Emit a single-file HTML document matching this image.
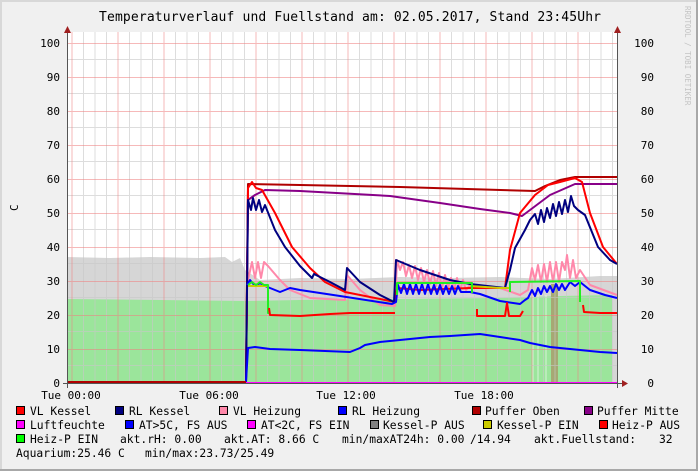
<!DOCTYPE html>
<html><head><meta charset="utf-8"><style>
html,body{margin:0;padding:0;background:#f0f0f0;}
svg{display:block;}
text{font-family:"DejaVu Sans Mono","Liberation Mono",monospace;fill:#000;}
</style></head><body>
<svg width="698" height="471" viewBox="0 0 698 471" xmlns="http://www.w3.org/2000/svg">
<rect x="0" y="0" width="698" height="471" fill="#f0f0f0"/>
<rect x="0" y="0" width="698" height="2" fill="#d8d8d8"/>
<rect x="0" y="0" width="2" height="471" fill="#d8d8d8"/>
<rect x="696" y="0" width="2" height="471" fill="#a8a8a8"/>
<rect x="0" y="469" width="698" height="2" fill="#a8a8a8"/>
<text x="99" y="21" font-size="13" textLength="502">Temperaturverlauf und Fuellstand am: 02.05.2017, Stand 23:45Uhr</text>
<text transform="translate(685,6) rotate(90)" font-size="7.5" style="fill:#c4c4c4">RRDTOOL / TOBI OETIKER</text>
<rect x="67" y="32" width="550" height="351" fill="#ffffff"/>
<polygon fill="#d6d6d6" points="67,383 67,257 110,258 150,257 200,258 225,257 232,262 240,258 245,270 260,280 300,278 350,279 400,277 450,278 500,277 550,279 600,276 617,276 617,383"/>
<polygon fill="#9be59b" points="67,383 67,299 245,301 300,300 400,299 500,298 560,296 612,295 612,383"/>
<rect x="551" y="284" width="7" height="99" fill="#a6a874"/>
<g stroke="#ffffff" stroke-width="1" opacity="0.6"><line x1="533" y1="295" x2="533" y2="383"/><line x1="538" y1="295" x2="538" y2="383"/><line x1="546" y1="295" x2="546" y2="383"/></g>
<g stroke="#c8c8c8" stroke-width="1" opacity="0.6">
<line x1="67" y1="365.5" x2="617" y2="365.5"/><line x1="67" y1="331.5" x2="617" y2="331.5"/><line x1="67" y1="297.5" x2="617" y2="297.5"/><line x1="67" y1="263.5" x2="617" y2="263.5"/><line x1="67" y1="229.5" x2="617" y2="229.5"/><line x1="67" y1="195.5" x2="617" y2="195.5"/><line x1="67" y1="161.5" x2="617" y2="161.5"/><line x1="67" y1="127.5" x2="617" y2="127.5"/><line x1="67" y1="93.5" x2="617" y2="93.5"/><line x1="67" y1="59.5" x2="617" y2="59.5"/>
<line x1="83.5" y1="32" x2="83.5" y2="383"/><line x1="95" y1="32" x2="95" y2="383"/><line x1="106.5" y1="32" x2="106.5" y2="383"/>
<line x1="129.5" y1="32" x2="129.5" y2="383"/><line x1="141" y1="32" x2="141" y2="383"/><line x1="152.5" y1="32" x2="152.5" y2="383"/>
<line x1="175.5" y1="32" x2="175.5" y2="383"/><line x1="187" y1="32" x2="187" y2="383"/><line x1="198.5" y1="32" x2="198.5" y2="383"/>
<line x1="221.5" y1="32" x2="221.5" y2="383"/><line x1="233" y1="32" x2="233" y2="383"/><line x1="244.5" y1="32" x2="244.5" y2="383"/>
<line x1="267.5" y1="32" x2="267.5" y2="383"/><line x1="279" y1="32" x2="279" y2="383"/><line x1="290.5" y1="32" x2="290.5" y2="383"/>
<line x1="313.5" y1="32" x2="313.5" y2="383"/><line x1="325" y1="32" x2="325" y2="383"/><line x1="336.5" y1="32" x2="336.5" y2="383"/>
<line x1="359.5" y1="32" x2="359.5" y2="383"/><line x1="371" y1="32" x2="371" y2="383"/><line x1="382.5" y1="32" x2="382.5" y2="383"/>
<line x1="405.5" y1="32" x2="405.5" y2="383"/><line x1="417" y1="32" x2="417" y2="383"/><line x1="428.5" y1="32" x2="428.5" y2="383"/>
<line x1="451.5" y1="32" x2="451.5" y2="383"/><line x1="463" y1="32" x2="463" y2="383"/><line x1="474.5" y1="32" x2="474.5" y2="383"/>
<line x1="497.5" y1="32" x2="497.5" y2="383"/><line x1="509" y1="32" x2="509" y2="383"/><line x1="520.5" y1="32" x2="520.5" y2="383"/>
<line x1="543.5" y1="32" x2="543.5" y2="383"/><line x1="555" y1="32" x2="555" y2="383"/><line x1="566.5" y1="32" x2="566.5" y2="383"/>
<line x1="589.5" y1="32" x2="589.5" y2="383"/><line x1="601" y1="32" x2="601" y2="383"/><line x1="612.5" y1="32" x2="612.5" y2="383"/>
</g>
<g stroke="#f08080" stroke-width="1" opacity="0.55">
<line x1="67" y1="349.5" x2="617" y2="349.5"/><line x1="67" y1="315.5" x2="617" y2="315.5"/><line x1="67" y1="281.5" x2="617" y2="281.5"/><line x1="67" y1="247.5" x2="617" y2="247.5"/><line x1="67" y1="213.5" x2="617" y2="213.5"/><line x1="67" y1="179.5" x2="617" y2="179.5"/><line x1="67" y1="145.5" x2="617" y2="145.5"/><line x1="67" y1="111.5" x2="617" y2="111.5"/><line x1="67" y1="77.5" x2="617" y2="77.5"/><line x1="67" y1="43.5" x2="617" y2="43.5"/>
<line x1="72" y1="32" x2="72" y2="383"/><line x1="118" y1="32" x2="118" y2="383"/><line x1="164" y1="32" x2="164" y2="383"/><line x1="210" y1="32" x2="210" y2="383"/><line x1="256" y1="32" x2="256" y2="383"/><line x1="302" y1="32" x2="302" y2="383"/><line x1="348" y1="32" x2="348" y2="383"/><line x1="394" y1="32" x2="394" y2="383"/><line x1="440" y1="32" x2="440" y2="383"/><line x1="486" y1="32" x2="486" y2="383"/><line x1="532" y1="32" x2="532" y2="383"/><line x1="578" y1="32" x2="578" y2="383"/>
</g>
<g fill="none" stroke-width="2" stroke-linejoin="round">
<polyline stroke="#b00000" points="67,382 246,382 248,184 300,185 400,187 535,191 545,186 560,180 575,177 617,177"/>
<polyline stroke="#880088" points="246,382 248,200 255,195 265,190 300,191 390,196 440,203 480,209 510,213 522,216 530,210 550,195 575,184 617,184"/>
<polyline stroke="#ff88aa" points="248,280 252,262 255,278 258,262 261,278 264,262 268,266 280,280 290,290 310,298 345,300 347,275 360,290 380,305 395,306 397,260 400,270 403,262 406,276 409,265 412,278 415,266 418,280 421,268 424,282 427,270 430,284 433,271 436,286 439,273 442,288 445,275 448,288 451,278 454,290 457,278 460,290 463,280 466,290 470,285 500,288 520,295 528,290 532,268 535,280 538,265 541,282 544,264 547,282 550,262 553,282 556,262 559,282 562,262 565,270 567,255 570,278 573,260 576,278 580,270 590,285 617,295"/>
<polyline stroke="#ff0000" points="246,382 248,188 252,182 256,188 262,190 275,213 292,247 310,268 325,282 345,292 395,302 397,288 420,290 470,288 505,288 510,250 520,213 535,195 548,185 560,182 575,178 582,182 590,213 603,247 617,264"/>
<polyline stroke="#000080" points="246,382 248,200 251,210 253,198 256,210 259,200 262,212 265,205 275,230 285,247 300,266 312,278 314,274 330,282 345,290 347,268 360,282 380,295 394,302 396,260 420,270 450,280 470,284 505,288 510,270 515,248 525,230 530,220 535,214 538,224 541,210 544,222 547,208 550,218 553,204 556,216 559,202 562,214 565,200 568,212 571,196 574,206 578,210 585,215 598,247 610,260 617,264"/>
<polyline stroke="#0000ff" points="247,285 250,280 255,286 260,283 265,286 280,292 290,288 300,290 340,296 392,304 396,302 398,285 401,293 404,284 407,294 410,284 413,294 416,284 419,294 422,284 425,294 428,284 431,294 434,285 437,294 440,285 443,294 446,286 449,294 452,286 455,294 458,286 461,292 470,292 480,294 500,301 520,304 525,300 528,298 532,290 535,296 538,288 541,294 544,286 547,292 550,286 553,292 556,284 559,290 562,284 565,290 570,282 575,286 580,282 590,290 605,295 617,298"/>
<polyline stroke="#0000ff" points="246,382 248,348 255,347 270,349 300,350 350,352 360,348 365,345 380,342 390,341 410,339 430,337 450,336 480,334 500,337 520,340 530,343 550,347 580,350 600,352 617,353"/>
<polyline stroke="#cccc00" points="248,286 268,286"/>
<polyline stroke="#cccc00" points="470,286 500,288 510,288"/>
<polyline stroke="#22ee22" points="248,285 252,282 256,285 260,282 264,285 268,285 268,313 270,313"/>
<polyline stroke="#22ee22" points="397,295 397,283 472,283 472,293"/>
<polyline stroke="#22ee22" points="510,292 510,282 580,281 580,302"/>
<polyline stroke="#ff0000" points="269,308 270,315 300,316 330,314 350,313 395,313"/>
<polyline stroke="#ff0000" points="477,309 477,316 505,316 507,303 509,316 520,316 523,311"/>
<polyline stroke="#ff0000" points="583,305 584,312 600,313 617,313"/>
<line stroke="#ff00ff" x1="67" y1="383" x2="617" y2="383"/>
<line stroke="#b00000" x1="67" y1="382" x2="246" y2="382"/>
</g>
<g stroke="#555" stroke-width="1">
<line x1="67.5" y1="28" x2="67.5" y2="388"/>
<line x1="617.5" y1="28" x2="617.5" y2="388"/>
<line x1="63" y1="383.5" x2="622" y2="383.5"/>
</g>
<polygon fill="#a02020" points="64,33 71,33 67.5,26"/>
<polygon fill="#a02020" points="614,33 621,33 617.5,26"/>
<polygon fill="#a02020" points="622,380 622,387 628,383.5"/>
<g font-size="11" text-anchor="end">
<text x="60" y="47">100</text><text x="60" y="81">90</text><text x="60" y="115">80</text><text x="60" y="149">70</text><text x="60" y="183">60</text><text x="60" y="217">50</text><text x="60" y="251">40</text><text x="60" y="285">30</text><text x="60" y="319">20</text><text x="60" y="353">10</text><text x="60" y="387">0</text>
</g>
<g font-size="11" text-anchor="end">
<text x="654" y="47">100</text><text x="654" y="81">90</text><text x="654" y="115">80</text><text x="654" y="149">70</text><text x="654" y="183">60</text><text x="654" y="217">50</text><text x="654" y="251">40</text><text x="654" y="285">30</text><text x="654" y="319">20</text><text x="654" y="353">10</text><text x="654" y="387">0</text>
</g>
<text transform="translate(18,211) rotate(-90)" font-size="11">C</text>
<g font-size="11" text-anchor="middle">
<text x="71" y="399">Tue 00:00</text><text x="209" y="399">Tue 06:00</text><text x="346" y="399">Tue 12:00</text><text x="484" y="399">Tue 18:00</text>
</g>
<g stroke="#000" stroke-width="1">
<rect x="16.5" y="406.5" width="8" height="8" fill="#ff0000"/>
<rect x="115.5" y="406.5" width="8" height="8" fill="#000080"/>
<rect x="219.5" y="406.5" width="8" height="8" fill="#ff88aa"/>
<rect x="338.5" y="406.5" width="8" height="8" fill="#0000ff"/>
<rect x="472.5" y="406.5" width="8" height="8" fill="#b00000"/>
<rect x="584.5" y="406.5" width="8" height="8" fill="#880088"/>
<rect x="16.5" y="420.5" width="8" height="8" fill="#ff00ff"/>
<rect x="125.5" y="420.5" width="8" height="8" fill="#0000ff"/>
<rect x="247.5" y="420.5" width="8" height="8" fill="#ff00ff"/>
<rect x="370.5" y="420.5" width="8" height="8" fill="#808080"/>
<rect x="483.5" y="420.5" width="8" height="8" fill="#cccc00"/>
<rect x="599.5" y="420.5" width="8" height="8" fill="#ff0000"/>
<rect x="16.5" y="434.5" width="8" height="8" fill="#00ff00"/>
</g>
<g font-size="11.3">
<text x="30" y="415">VL Kessel</text>
<text x="129" y="415">RL Kessel</text>
<text x="233" y="415">VL Heizung</text>
<text x="352" y="415">RL Heizung</text>
<text x="485" y="415">Puffer Oben</text>
<text x="597" y="415">Puffer Mitte</text>
<text x="30" y="429">Luftfeuchte</text>
<text x="139" y="429">AT&gt;5C, FS AUS</text>
<text x="261" y="429">AT&lt;2C, FS EIN</text>
<text x="383" y="429">Kessel-P AUS</text>
<text x="497" y="429">Kessel-P EIN</text>
<text x="612" y="429">Heiz-P AUS</text>
<text x="30" y="443">Heiz-P EIN</text>
<text x="120" y="443">akt.rH: 0.00</text>
<text x="224" y="443">akt.AT: 8.66 C</text>
<text x="342" y="443">min/maxAT24h: 0.00</text>
<text x="470" y="443">/14.94</text>
<text x="534" y="443">akt.Fuellstand:</text>
<text x="659" y="443">32</text>
<text x="16" y="457">Aquarium:25.46 C</text>
<text x="145" y="457">min/max:23.73/25.49</text>
</g>
</svg>
</body></html>
